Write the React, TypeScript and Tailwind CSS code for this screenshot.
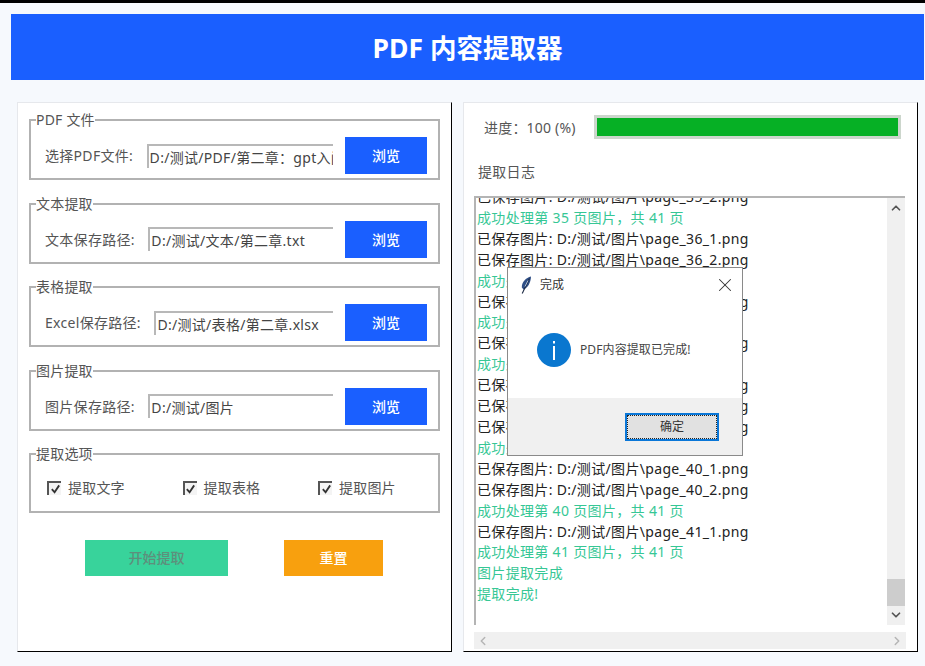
import { ChevronDown, ChevronLeft, ChevronRight, ChevronUp, X } from 'lucide-react';

const font = { fontFamily: '"Noto Sans", "Noto Sans CJK SC", sans-serif' };

type PathRow = { legend: string; label: string; value: string };

const pathRows: PathRow[] = [
  { legend: 'PDF 文件', label: '选择PDF文件:', value: 'D:/测试/PDF/第二章\uFF1Agpt入门.pdf' },
  { legend: '文本提取', label: '文本保存路径:', value: 'D:/测试/文本/第二章.txt' },
  { legend: '表格提取', label: 'Excel保存路径:', value: 'D:/测试/表格/第二章.xlsx' },
  { legend: '图片提取', label: '图片保存路径:', value: 'D:/测试/图片' },
];

const saved = (name: string) => `已保存图片: D:/测试/图片\\page_${name}.png`;
const done = (n: number) => `成功处理第 ${n} 页图片\uFF0C共 41 页`;

const logLines: { text: string; ok?: boolean }[] = [
  { text: saved('35_2') },
  { text: done(35), ok: true },
  { text: saved('36_1') },
  { text: saved('36_2') },
  { text: done(36), ok: true },
  { text: saved('37_1') },
  { text: done(37), ok: true },
  { text: saved('38_1') },
  { text: done(38), ok: true },
  { text: saved('39_1') },
  { text: saved('39_2') },
  { text: saved('39_3') },
  { text: done(39), ok: true },
  { text: saved('40_1') },
  { text: saved('40_2') },
  { text: done(40), ok: true },
  { text: saved('41_1') },
  { text: done(41), ok: true },
  { text: '图片提取完成', ok: true },
  { text: '提取完成!', ok: true },
];

function GroupBox({ legend, children }: { legend: string; children: React.ReactNode }) {
  return (
    <fieldset className="w-[411px] min-w-0 border-2 border-[#b2b2b2]">
      <legend className="ml-[5px] text-[14px] leading-[20px] tracking-[0.2px] text-[#555]">{legend}</legend>
      {children}
    </fieldset>
  );
}

function Option({ label }: { label: string }) {
  return (
    <div className="flex w-[135.5px] shrink-0 items-center">
      <span className="flex h-[14px] w-[14px] items-center justify-center border-t-2 border-l-2 border-[#555] bg-[#f4f4f4]">
        <svg viewBox="0 0 12 12" className="h-[11px] w-[11px]">
          <path d="M2 5.5 L5 9 L10 1.5" fill="none" stroke="#333" strokeWidth="2" />
        </svg>
      </span>
      <span className="ml-[7px] text-[14px] leading-[20px] tracking-[0.2px] text-[#555]">{label}</span>
    </div>
  );
}

function Feather() {
  return (
    <svg viewBox="0 0 12 18" className="h-[18px] w-[12px]">
      <path d="M11 0.5 C6 1.5 1.5 6.5 1.8 11.5 L3.5 13.5 C7.5 12 10.8 7 11 0.5 Z" fill="#2f4f86" />
      <path d="M9.5 2.5 L2.2 17.5" stroke="#1c2a44" strokeWidth="1.1" fill="none" />
      <path d="M8 4.5 L5 10.5" stroke="#cfe0f2" strokeWidth="0.8" fill="none" />
    </svg>
  );
}

function MessageBox() {
  return (
    <div className="absolute left-[43px] top-[164px] flex h-[189px] w-[236px] flex-col border border-[#8a8a8a] bg-white">
      <div className="flex h-[33px] shrink-0 items-center pl-[12px] pr-[6px]">
        <Feather />
        <span className="ml-[8px] text-[12px] text-[#333]">完成</span>
        <X className="ml-auto h-[22px] w-[22px] text-[#333]" strokeWidth={1.1} />
      </div>
      <div className="flex flex-1 items-center pl-[29px]">
        <svg viewBox="0 0 34 34" className="h-[34px] w-[34px]">
          <circle cx="17" cy="17" r="17" fill="#0a77cf" />
          <rect x="16" y="13" width="2" height="14" fill="#fff" />
          <rect x="16" y="8" width="2" height="2.5" fill="#fff" />
        </svg>
        <span className="ml-[9px] text-[12px] tracking-[0.1px] text-[#444]">PDF内容提取已完成!</span>
      </div>
      <div className="flex h-[57px] shrink-0 items-center justify-end bg-[#f0f0f0] pr-[23px] pt-[1px]">
        <button className="flex h-[28px] w-[94px] items-center justify-center border-2 border-[#0a77d8] bg-[#e1e1e1] text-[12px] text-[#333] outline-1 -outline-offset-3 outline-dotted outline-[#222]">
          确定
        </button>
      </div>
    </div>
  );
}

export default function App() {
  return (
    <div className="h-[666px] w-[925px] overflow-hidden border-t-[3px] border-black bg-[#f6f9fd]" style={font}>
      <header className="ml-[11px] mr-px mt-[11px] flex h-[66px] items-center justify-center bg-[#1a5fff] pt-[3px]">
        <h1 className="text-[26.5px] font-bold text-white">PDF 内容提取器</h1>
      </header>

      <div className="ml-[17px] mt-[22px] flex h-[550px] gap-[11px]">
        <section className="flex w-[435px] flex-col gap-[13.5px] border border-[#e6e8ec] border-r-black border-b-black bg-white pl-[11px] pt-[7px]">
          {pathRows.map((row) => (
            <GroupBox key={row.legend} legend={row.legend}>
              <div className="flex items-center pb-[4px] pl-[14px] pr-[11px] pt-[7px]">
                <span className="whitespace-nowrap text-[14px] tracking-[0.3px] text-[#555]">{row.label}</span>
                <input
                  readOnly
                  value={row.value}
                  className="ml-[13.5px] h-[24px] w-0 min-w-0 flex-1 border-t-2 border-l-2 border-[#b8b8b8] pl-[1px] text-[14px] tracking-[0.3px] text-[#444] outline-none"
                />
                <button className="ml-[12px] h-[37px] w-[82px] shrink-0 bg-[#1a5fff] text-[14px] font-medium text-white">浏览</button>
              </div>
            </GroupBox>
          ))}
          <GroupBox legend="提取选项">
            <div className="flex pb-[13px] pl-[16px] pt-[14px]">
              <Option label="提取文字" />
              <Option label="提取表格" />
              <Option label="提取图片" />
            </div>
          </GroupBox>
          <div className="ml-[56px] mt-[13px] flex gap-[56px]">
            <button className="h-[36px] w-[143px] bg-[#38d39b] text-[14px] font-medium text-[#5e8f7c]">开始提取</button>
            <button className="h-[36px] w-[99px] bg-[#f8a00e] text-[14px] font-medium text-white">重置</button>
          </div>
        </section>

        <section className="relative flex w-[455px] flex-col border border-[#e6e8ec] border-r-black border-b-black bg-white">
          <div className="ml-[20px] mt-[12px] flex items-center">
            <span className="w-[110px] whitespace-nowrap text-[14px] tracking-[0.2px] text-[#555]">进度{'\uFF1A'}100 (%)</span>
            <div className="h-[24px] w-[307px] border-[3px] border-[#ccd6cc] bg-[#e6e6e6]">
              <div className="h-full bg-[#06b025]" style={{ width: '100%' }} />
            </div>
          </div>
          <p className="ml-[14px] mt-[23px] text-[14px] leading-[20px] tracking-[0.3px] text-[#555]">提取日志</p>

          <div className="ml-[10px] mt-[14px] flex h-[429px] w-[431px] overflow-hidden border-t-2 border-l-2 border-[#b4b4b4]">
            <div className="min-w-0 flex-1 overflow-hidden">
              <div className="-mt-[11px] pl-[1px] text-[14px] leading-[20.9px] tracking-[0.33px]">
                {logLines.map((line, i) => (
                  <div key={i} className={line.ok ? 'whitespace-nowrap text-[#36c795]' : 'whitespace-nowrap text-[#222]'}>
                    {line.text}
                  </div>
                ))}
              </div>
            </div>
            <div className="flex w-[18px] shrink-0 flex-col items-center bg-[#f0f0f0]">
              <ChevronUp className="mt-[3px] h-[14px] w-[14px] text-[#555]" strokeWidth={3} />
              <div className="mb-[2px] mt-auto h-[27px] w-full bg-[#cdcdcd]" />
              <ChevronDown className="mb-[3px] h-[14px] w-[14px] text-[#555]" strokeWidth={3} />
            </div>
          </div>

          <div className="ml-[10px] mt-[7px] flex h-[17px] w-[432px] items-center justify-between bg-[#f0f0f0] px-[2px]">
            <ChevronLeft className="h-[14px] w-[14px] text-[#b5b5b5]" strokeWidth={2.5} />
            <ChevronRight className="h-[14px] w-[14px] text-[#b5b5b5]" strokeWidth={2.5} />
          </div>

          <MessageBox />
        </section>
      </div>
    </div>
  );
}
